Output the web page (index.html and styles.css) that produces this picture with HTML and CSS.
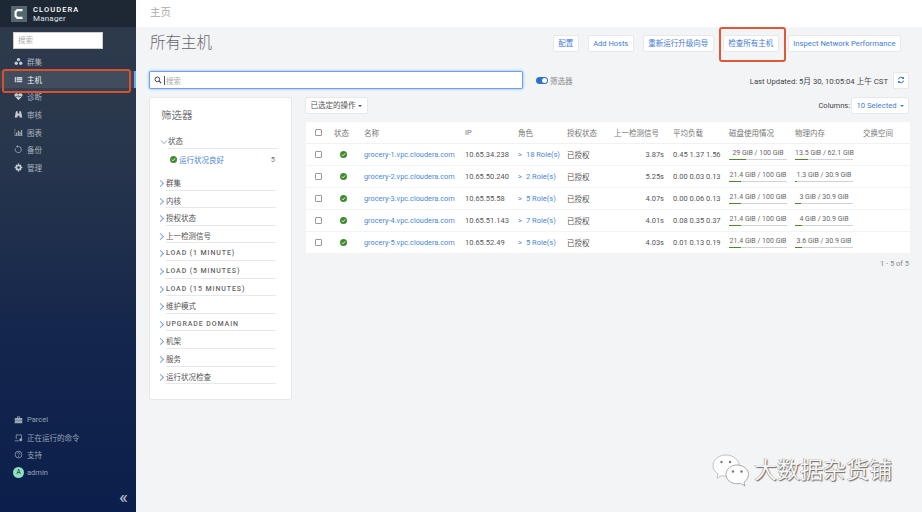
FILE: index.html
```html
<!DOCTYPE html>
<html lang="zh">
<head>
<meta charset="utf-8">
<title>所有主机</title>
<link rel="stylesheet" href="styles.css">
</head>
<body>
<div class="app">
  <aside class="sidebar">
    <div class="brand">
      <svg class="brand-mark" viewBox="0 0 16 16"><rect width="16" height="16" fill="#56666f"/><path d="M11.5 4.2H6.4L4.6 6v4l1.8 1.8h5.1" fill="none" stroke="#fff" stroke-width="2.2"/></svg>
      <div class="brand-text"><div class="brand-top">CLOUDERA</div><div class="brand-sub">Manager</div></div>
    </div>
    <div class="side-search"><input class="side-input" placeholder="搜索"></div>
    <nav class="nav">
      <a class="nav-item"><svg class="ico" viewBox="0 0 12 12"><circle cx="6" cy="3.4" r="2.2"/><circle cx="3" cy="8.3" r="2.2"/><circle cx="9" cy="8.3" r="2.2"/></svg>群集</a>
      <a class="nav-item active"><svg class="ico" viewBox="0 0 12 12"><path d="M1 2.5h1.6v7H1zM3.4 2.5H11v2H3.4zM3.4 5h7.6v2H3.4zM3.4 7.5H11v2H3.4z"/></svg>主机</a>
      <a class="nav-item"><svg class="ico" viewBox="0 0 12 12"><path d="M6 11 1 5.6C-.2 3.4 1.4 1.6 3.3 1.6 4.5 1.6 5.4 2.2 6 3c.6-.8 1.500-1.400 2.700-1.400 1.900 0 3.500 1.800 2.300 4z"/><path d="M2 6h2.500l1-1.500 1 2.500.8-1H10" fill="none" stroke="#2a3a50" stroke-width=".8"/></svg>诊断</a>
      <a class="nav-item"><svg class="ico" viewBox="0 0 12 12"><path d="M2.600 1.500h2.300v3h2.200v-3h2.300l1.600 8.500H7.400V7.500H4.600V10H1z"/></svg>审核</a>
      <a class="nav-item"><svg class="ico" viewBox="0 0 12 12"><path d="M1 1v9.500h10.500V10H1.500V1z"/><path d="M3 6h1.200v3.500H3zM5.200 3.500h1.200v6H5.200zM7.400 5h1.200v4.500H7.400zM9.600 2.500h1.200v7H9.600z"/></svg>图表</a>
      <a class="nav-item"><svg class="ico" viewBox="0 0 12 12"><path d="M2 4.500A4 4 0 1 0 6 2H3.500M5 .6 3.300 2 5 3.400" fill="none" stroke="#aab4c0" stroke-width="1"/></svg>备份</a>
      <a class="nav-item"><svg class="ico" viewBox="0 0 12 12"><circle cx="6" cy="6" r="2.800" fill="none" stroke="#c4ccd6" stroke-width="2"/><path d="M5 .8h2v2H5zM5 9.200h2v2H5zM.8 5h2v2h-2zM9.200 5h2v2h-2zM2 3.400l1.400-1.400 1.200 1.200-1.400 1.400zM7.400 8.800l1.400-1.400L10 8.600 8.600 10zM8.600 2 10 3.400 8.800 4.600 7.400 3.200zM3.200 7.400l1.400 1.400L3.400 10 2 8.600z"/></svg>管理</a>
    </nav>
    <div class="side-bottom">
      <a class="nav-item dim"><svg class="ico" viewBox="0 0 12 12"><path d="M1 4h10v2.500H1zM1 7h10v4H1zM4 4V2h4v2H7V3H5v1z"/></svg>Parcel</a>
      <a class="nav-item dim"><svg class="ico" viewBox="0 0 12 12"><path d="M3 8V2.500h7V8" fill="none" stroke="#9aa6b6" stroke-width="1"/><path d="M1 10h5.500v1H1z"/><circle cx="9" cy="9" r="2"/></svg>正在运行的命令</a>
      <a class="nav-item dim"><svg class="ico" viewBox="0 0 12 12"><circle cx="6" cy="6" r="4.500" fill="none" stroke="#9aa6b6" stroke-width="1"/><path d="M4.500 4.800C4.600 3 7.600 3 7.600 4.800 7.600 6 6 6 6 7.300" fill="none" stroke="#9aa6b6" stroke-width="1"/><path d="M5.500 8h1v1h-1z"/></svg>支持</a>
      <a class="nav-item dim"><span class="avatar">A</span>admin</a>
      <div class="collapse">«</div>
    </div>
  </aside>
  <main class="main">
    <div class="crumb">主页</div>
    <div class="content">
      <div class="title-row">
        <h1 class="title">所有主机</h1>
        <div class="actions">
          <button class="btn">配置</button>
          <button class="btn">Add Hosts</button>
          <button class="btn">重新运行升级向导</button>
          <span class="callout"><button class="btn">检查所有主机</button></span>
          <button class="btn wide">Inspect Network Performance</button>
        </div>
      </div>
      <div class="search-row">
        <div class="search-box">
          <svg class="search-ico" viewBox="0 0 12 12"><circle cx="5" cy="5" r="3.500" fill="none" stroke="#444" stroke-width="1.500"/><path d="m7.800 7.800 3 3" stroke="#444" stroke-width="1.800"/></svg>
          <span class="caret"></span><span class="search-ph">搜索</span>
        </div>
        <span class="toggle"><span class="knob"></span></span>
        <span class="toggle-label">筛选器</span>
        <span class="updated">Last Updated: 5月 30, 10:05:04 上午 CST</span>
        <button class="btn refresh"><svg viewBox="0 0 12 12" class="refresh-ico"><path d="M2 5a4.200 4.200 0 0 1 7.400-1.500M10 7a4.200 4.200 0 0 1-7.400 1.500" fill="none" stroke="#2f6fd0" stroke-width="1.500"/><path d="M10.500 1v3.500H7zM1.500 11V7.500H5z" fill="#2f6fd0"/></svg></button>
      </div>
      <div class="body-row">
        <section class="filters">
          <h2 class="filters-title">筛选器</h2>
          <div class="fgroup open">
            <svg class="chev" viewBox="0 0 8 8"><path d="m1 2.500 3 3 3-3" fill="none" stroke="#7ba4e0" stroke-width="1"/></svg>状态
          </div>
          <div class="fvalue">
            <svg class="ok small" viewBox="0 0 12 12"><circle cx="6" cy="6" r="6" fill="#3f8a2e"/><path d="m3.200 6.200 2 2 3.600-4" fill="none" stroke="#fff" stroke-width="1.600"/></svg>
            <a class="flink">运行状况良好</a><span class="fcount">5</span>
          </div>
          <div class="flist">
            <div class="fitem">群集</div>
            <div class="fitem">内核</div>
            <div class="fitem">授权状态</div>
            <div class="fitem">上一检测信号</div>
            <div class="fitem caps">LOAD (1 MINUTE)</div>
            <div class="fitem caps">LOAD (5 MINUTES)</div>
            <div class="fitem caps">LOAD (15 MINUTES)</div>
            <div class="fitem">维护模式</div>
            <div class="fitem caps">UPGRADE DOMAIN</div>
            <div class="fitem">机架</div>
            <div class="fitem">服务</div>
            <div class="fitem">运行状况检查</div>
          </div>
        </section>
        <section class="results">
          <div class="toolbar">
            <button class="btn plain">已选定的操作 <i class="tri"></i></button>
            <span class="columns"><span>Columns:</span><button class="btn blue">10 Selected <i class="tri"></i></button></span>
          </div>
          <table class="hosts">
            <colgroup>
              <col class="c1"><col class="c2"><col class="c3"><col class="c4"><col class="c5"><col class="c6"><col class="c7"><col class="c8"><col class="c9"><col class="c10"><col class="c11">
            </colgroup>
            <thead>
              <tr><th class="chk"><span class="box"></span></th><th>状态</th><th>名称</th><th>IP</th><th>角色</th><th>授权状态</th><th>上一检测信号</th><th>平均负载</th><th>磁盘使用情况</th><th>物理内存</th><th>交换空间</th></tr>
            </thead>
            <tbody>
              <tr><td class="chk"><span class="box"></span></td><td class="st"><svg class="ok" viewBox="0 0 12 12"><circle cx="6" cy="6" r="6" fill="#3f8a2e"/><path d="m3.200 6.200 2 2 3.600-4" fill="none" stroke="#fff" stroke-width="1.600"/></svg></td><td><a class="link host">grocery-1.vpc.cloudera.com</a></td><td>10.65.34.238</td><td><a class="link"><span class="gt">&gt;</span>18 Role(s)</a></td><td>已授权</td><td class="num">3.87s</td><td>0.45 1.37 1.56</td>
                <td><div class="meter"><span>29 GiB / 100 GiB</span><div class="bar"><div class="fill" style="width:29%"></div></div></div></td>
                <td><div class="meter"><span>13.5 GiB / 62.1 GiB</span><div class="bar"><div class="fill" style="width:22%"></div></div></div></td><td></td></tr>
              <tr><td class="chk"><span class="box"></span></td><td class="st"><svg class="ok" viewBox="0 0 12 12"><circle cx="6" cy="6" r="6" fill="#3f8a2e"/><path d="m3.200 6.200 2 2 3.600-4" fill="none" stroke="#fff" stroke-width="1.600"/></svg></td><td><a class="link host">grocery-2.vpc.cloudera.com</a></td><td>10.65.50.240</td><td><a class="link"><span class="gt">&gt;</span>2 Role(s)</a></td><td>已授权</td><td class="num">5.25s</td><td>0.00 0.03 0.13</td>
                <td><div class="meter"><span>21.4 GiB / 100 GiB</span><div class="bar"><div class="fill" style="width:21.400%"></div></div></div></td>
                <td><div class="meter"><span>1.3 GiB / 30.9 GiB</span><div class="bar"><div class="fill" style="width:4.200%"></div></div></div></td><td></td></tr>
              <tr><td class="chk"><span class="box"></span></td><td class="st"><svg class="ok" viewBox="0 0 12 12"><circle cx="6" cy="6" r="6" fill="#3f8a2e"/><path d="m3.200 6.200 2 2 3.600-4" fill="none" stroke="#fff" stroke-width="1.600"/></svg></td><td><a class="link host">grocery-3.vpc.cloudera.com</a></td><td>10.65.55.58</td><td><a class="link"><span class="gt">&gt;</span>5 Role(s)</a></td><td>已授权</td><td class="num">4.07s</td><td>0.00 0.06 0.13</td>
                <td><div class="meter"><span>21.4 GiB / 100 GiB</span><div class="bar"><div class="fill" style="width:21.400%"></div></div></div></td>
                <td><div class="meter"><span>3 GiB / 30.9 GiB</span><div class="bar"><div class="fill" style="width:9.700%"></div></div></div></td><td></td></tr>
              <tr><td class="chk"><span class="box"></span></td><td class="st"><svg class="ok" viewBox="0 0 12 12"><circle cx="6" cy="6" r="6" fill="#3f8a2e"/><path d="m3.200 6.200 2 2 3.600-4" fill="none" stroke="#fff" stroke-width="1.600"/></svg></td><td><a class="link host">grocery-4.vpc.cloudera.com</a></td><td>10.65.51.143</td><td><a class="link"><span class="gt">&gt;</span>7 Role(s)</a></td><td>已授权</td><td class="num">4.01s</td><td>0.08 0.35 0.37</td>
                <td><div class="meter"><span>21.4 GiB / 100 GiB</span><div class="bar"><div class="fill" style="width:21.400%"></div></div></div></td>
                <td><div class="meter"><span>4 GiB / 30.9 GiB</span><div class="bar"><div class="fill" style="width:12.900%"></div></div></div></td><td></td></tr>
              <tr><td class="chk"><span class="box"></span></td><td class="st"><svg class="ok" viewBox="0 0 12 12"><circle cx="6" cy="6" r="6" fill="#3f8a2e"/><path d="m3.200 6.200 2 2 3.600-4" fill="none" stroke="#fff" stroke-width="1.600"/></svg></td><td><a class="link host">grocery-5.vpc.cloudera.com</a></td><td>10.65.52.49</td><td><a class="link"><span class="gt">&gt;</span>5 Role(s)</a></td><td>已授权</td><td class="num">4.03s</td><td>0.01 0.13 0.19</td>
                <td><div class="meter"><span>21.4 GiB / 100 GiB</span><div class="bar"><div class="fill" style="width:21.400%"></div></div></div></td>
                <td><div class="meter"><span>3.6 GiB / 30.9 GiB</span><div class="bar"><div class="fill" style="width:11.700%"></div></div></div></td><td></td></tr>
            </tbody>
          </table>
          <div class="pager">1 - 5 of 5</div>
        </section>
      </div>
    </div>
    <div class="watermark">
      <svg class="wechat" viewBox="0 0 37 33"><path d="M14 1C7 1 1 5.500 1 11.500c0 3.500 2 6.400 5 8.400L5 24l4.500-2.400c1.400.4 3 .7 4.500.7 7 0 13-5 13-10.800S21 1 14 1z" fill="#fff" stroke="#aaa" stroke-width=".7"/><circle cx="9.500" cy="8" r="1.200" fill="#777"/><circle cx="18" cy="8" r="1.200" fill="#777"/><path d="M25 11c-6 0-11 4.200-11 9.400s5 9.400 11 9.400c1.200 0 2.500-.2 3.500-.5L33 32l-1-3.800c2.700-1.800 4.500-4.600 4.500-7.800C36.500 15.200 31 11 25 11z" fill="#fff" stroke="#888" stroke-width=".7"/><circle cx="21" cy="17.500" r="1.200" fill="#777"/><circle cx="29.500" cy="17.500" r="1.200" fill="#777"/></svg>
      <span class="wm-text">大数据杂货铺</span>
    </div>
  </main>
</div>
</body>
</html>
```
FILE: styles.css
```css
* { box-sizing: border-box; }
html, body { margin: 0; padding: 0; height: 100%; }
body {
  font-family: Roboto, "Noto Sans CJK SC", sans-serif;
  font-size: 7.5px;
  color: #555;
  overflow: hidden;
}
.app { display: flex; width: 922px; height: 512px; }

/* sidebar */
.sidebar {
  width: 136px;
  flex: none;
  display: flex;
  flex-direction: column;
  background: linear-gradient(180deg, #2f3b4c 0%, #28364c 30%, #14264c 65%, #0b1f4c 100%);
  color: #b6bfca;
  position: relative;
}
.brand {
  height: 27px;
  background: #1e2834;
  display: flex;
  align-items: center;
  padding-left: 11px;
  gap: 6px;
}
.brand-mark { width: 16px; height: 16px; }
.brand-text { color: #dfe3e8; line-height: 9px; }
.brand-top { font-size: 7.500px; letter-spacing: 1.100px; font-weight: 500; color: #fff; }
.brand-sub { font-size: 8px; letter-spacing: .2px; }
.side-search { padding: 5px 33px 0 13px; height: 26px; }
.side-input {
  width: 90px;
  height: 17px;
  border: 1px solid #ccc;
  background: #fff;
  padding: 0 4px;
  font: 7.500px Roboto, "Noto Sans CJK SC", sans-serif;
  display: block;
  outline: 0;
}
.side-input::placeholder { color: #aaa; }
.nav { display: flex; flex-direction: column; }
.nav-item {
  display: flex;
  align-items: center;
  height: 17.600px;
  padding-left: 14px;
  gap: 4px;
  font-size: 7.500px;
  color: #aab3bf;
}
.ico { width: 9px; height: 9px; fill: #c4ccd6; flex: none; }
.nav-item.active {
  color: #eef1f4;
  background: #3a4656;
  position: relative;
}
.nav-item.active::before {
  content: "";
  position: absolute;
  left: 2px;
  top: -1.500px;
  width: 125px;
  height: 20px;
  background: rgba(255, 255, 255, .04);
  border: 2px solid #d9512c;
  border-radius: 3px;
}
.nav-item.active::after {
  content: "";
  position: absolute;
  right: 0;
  top: 0;
  width: 2px;
  height: 17.600px;
  background: #6aa9ea;
}
.side-bottom { margin-top: auto; display: flex; flex-direction: column; padding-bottom: 6px; }
.dim { color: #98a3b4; }
.dim .ico { fill: #9aa6b6; }
.avatar {
  width: 11px;
  height: 11px;
  margin-left: -1px;
  margin-right: -1px;
  border-radius: 50%;
  background: #8fe0bd;
  color: #123;
  font-size: 6.500px;
  text-align: center;
  line-height: 11px;
  flex: none;
}
.collapse {
  margin-top: 7px;
  text-align: right;
  padding-right: 8px;
  font-size: 19px;
  line-height: 18px;
  color: #b9c2cf;
}

/* main */
.main { flex: 1; min-width: 0; background: #f3f4f6; position: relative; }
.crumb {
  height: 27px;
  background: #fff;
  padding: 6px 0 0 14px;
  font-size: 10.500px;
  line-height: 14px;
  color: #aaa;
}
.content { padding: 0 13px 0 13px; }
.title-row { display: flex; justify-content: space-between; height: 44px; }
.title {
  margin: 6px 0 0 1px;
  font-size: 15.500px;
  font-weight: 300;
  line-height: 20px;
  color: #666;
}
.actions { display: flex; align-items: flex-start; padding-top: 8px; gap: 9px; margin-right: 8px; }
.btn {
  height: 17px;
  padding: 0 4.500px;
  background: #fff;
  border: 1px solid #e6e8ec;
  border-radius: 2px;
  color: #3f7bd4;
  font: 7.500px/15px Roboto, "Noto Sans CJK SC", sans-serif;
  white-space: nowrap;
}
.wide { font-size: 7.700px; }
.callout { position: relative; display: flex; }
.callout::before {
  content: "";
  position: absolute;
  left: -4px;
  right: -7px;
  top: -8px;
  height: 31px;
  border: 2px solid #e0583a;
  border-radius: 3px;
}
.search-row { display: flex; align-items: center; height: 18px; }
.search-box {
  width: 374px;
  height: 18px;
  background: #fff;
  border: 1px solid #6fa3e8;
  box-shadow: 0 0 2px 1px #b4d3f6;
  border-radius: 2px;
  display: flex;
  align-items: center;
  padding-left: 4px;
}
.search-ico { width: 8px; height: 8px; margin-right: 2px; }
.caret { width: 1px; height: 9px; background: #555; margin-right: 1px; }
.search-ph { color: #aaa; }
.toggle {
  width: 12px;
  height: 7px;
  border-radius: 4px;
  background: #2f6fd0;
  margin-left: 13px;
  position: relative;
  flex: none;
}
.knob { position: absolute; right: 1px; top: 1px; width: 5px; height: 5px; border-radius: 50%; background: #fff; }
.toggle-label { margin-left: 2px; color: #888; }
.updated { margin-left: auto; color: #444; white-space: nowrap; font-size: 7.700px; }
.refresh { width: 16px; height: 17px; margin-left: 5px; padding: 0; display: flex; align-items: center; justify-content: center; flex: none; }
.refresh-ico { width: 8px; height: 8px; }

.body-row { display: flex; align-items: flex-start; gap: 13px; margin-top: 8px; }
.filters {
  width: 143px;
  height: 303px;
  flex: none;
  background: #fff;
  border: 1px solid #e6e8ec;
  border-radius: 2px;
  padding: 11px 15px 0 11px;
}
.filters-title { margin: 0; font-size: 10.500px; font-weight: 400; line-height: 14px; color: #777; }
.fgroup {
  margin: 12px -2px 0 7px;
  position: relative;
  line-height: 14px;
  height: 14px;
  font-size: 7.500px;
  border-bottom: 1px solid #e6e8ec;
  color: #555;
}
.chev { position: absolute; left: -8px; top: 3px; width: 8px; height: 8px; }
.fvalue { display: flex; align-items: center; height: 20px; padding-left: 9px; }
.ok { width: 7px; height: 7px; display: block; }
.ok.small { margin-right: 2px; }
.flink { color: #4a86d8; }
.fcount { margin-left: auto; margin-right: 1px; color: #777; }
.flist { margin-top: 4px; display: flex; flex-direction: column; }
.fitem {
  margin-left: 5px;
  height: 17.600px;
  line-height: 21px;
  border-bottom: 1px solid #e6e8ec;
  position: relative;
  color: #555;
  font-size: 7.500px;
}
.fitem::before {
  content: "";
  position: absolute;
  left: -8.500px;
  top: 8px;
  width: 4px;
  height: 4px;
  border-top: 1px solid #7ba4e0;
  border-right: 1px solid #7ba4e0;
  transform: rotate(45deg);
}
.caps { letter-spacing: .9px; font-weight: 500; font-size: 7px; color: #666; }

.results { flex: 1; min-width: 0; }
.toolbar { display: flex; justify-content: space-between; align-items: flex-start; height: 25px; }
.plain { color: #555; }
.blue { color: #3f7bd4; font-size: 7.700px; }
.tri {
  display: inline-block;
  margin-left: 1px;
  vertical-align: 1px;
  border-left: 2px solid transparent;
  border-right: 2px solid transparent;
  border-top: 2.500px solid currentColor;
}
.columns { display: flex; align-items: center; gap: 1px; color: #444; }
.hosts {
  width: 604px;
  border-collapse: collapse;
  table-layout: fixed;
  background: #fff;
  margin-left: 1px;
}
.c1 { width: 22px; } .c2 { width: 30px; } .c3 { width: 101px; } .c4 { width: 53px; }
.c5 { width: 49px; } .c6 { width: 47px; } .c7 { width: 59px; } .c8 { width: 56px; }
.c9 { width: 66px; } .c10 { width: 68px; } .c11 { width: 53px; }
.hosts th {
  height: 21px;
  padding: 0 6px;
  font-weight: 400;
  text-align: left;
  color: #777;
  border-bottom: 1px solid #f0f1f3;
  white-space: nowrap;
}
.hosts td {
  height: 22px;
  padding: 0 6px;
  color: #555;
  border-bottom: 1px solid #f3f4f6;
  white-space: nowrap;
}
.hosts .chk { padding: 0 0 0 9px; }
.box { display: block; width: 7px; height: 7px; border: 1px solid #999; border-radius: 1px; background: #fff; }
.hosts .st { padding-left: 12px; }
.hosts .num { text-align: right; padding-right: 3px; }
.link { color: #4a86d8; }
.host { font-size: 7.350px; }
.gt { margin-right: 4px; }
.meter { width: 58px; text-align: center; font-size: 7px; color: #666; line-height: 9px; margin-top: 1px; }
.bar { height: 1.500px; background: #d0d2d6; margin-top: 1px; }
.fill { height: 100%; background: #4a8a2a; }
.pager { text-align: right; margin-top: 5px; color: #888; line-height: 9px; }

/* watermark over the page */
.watermark {
  position: absolute;
  left: 576px;
  top: 454px;
  display: flex;
  align-items: center;
  gap: 5px;
}
.wechat { width: 37px; height: 33px; }
.wm-text {
  font-size: 23px;
  line-height: 33px;
  color: #f6f6f6;
  text-shadow: 1px 1px 1px #666, -.5px -.5px .5px #888;
  font-weight: 400;
}
```
